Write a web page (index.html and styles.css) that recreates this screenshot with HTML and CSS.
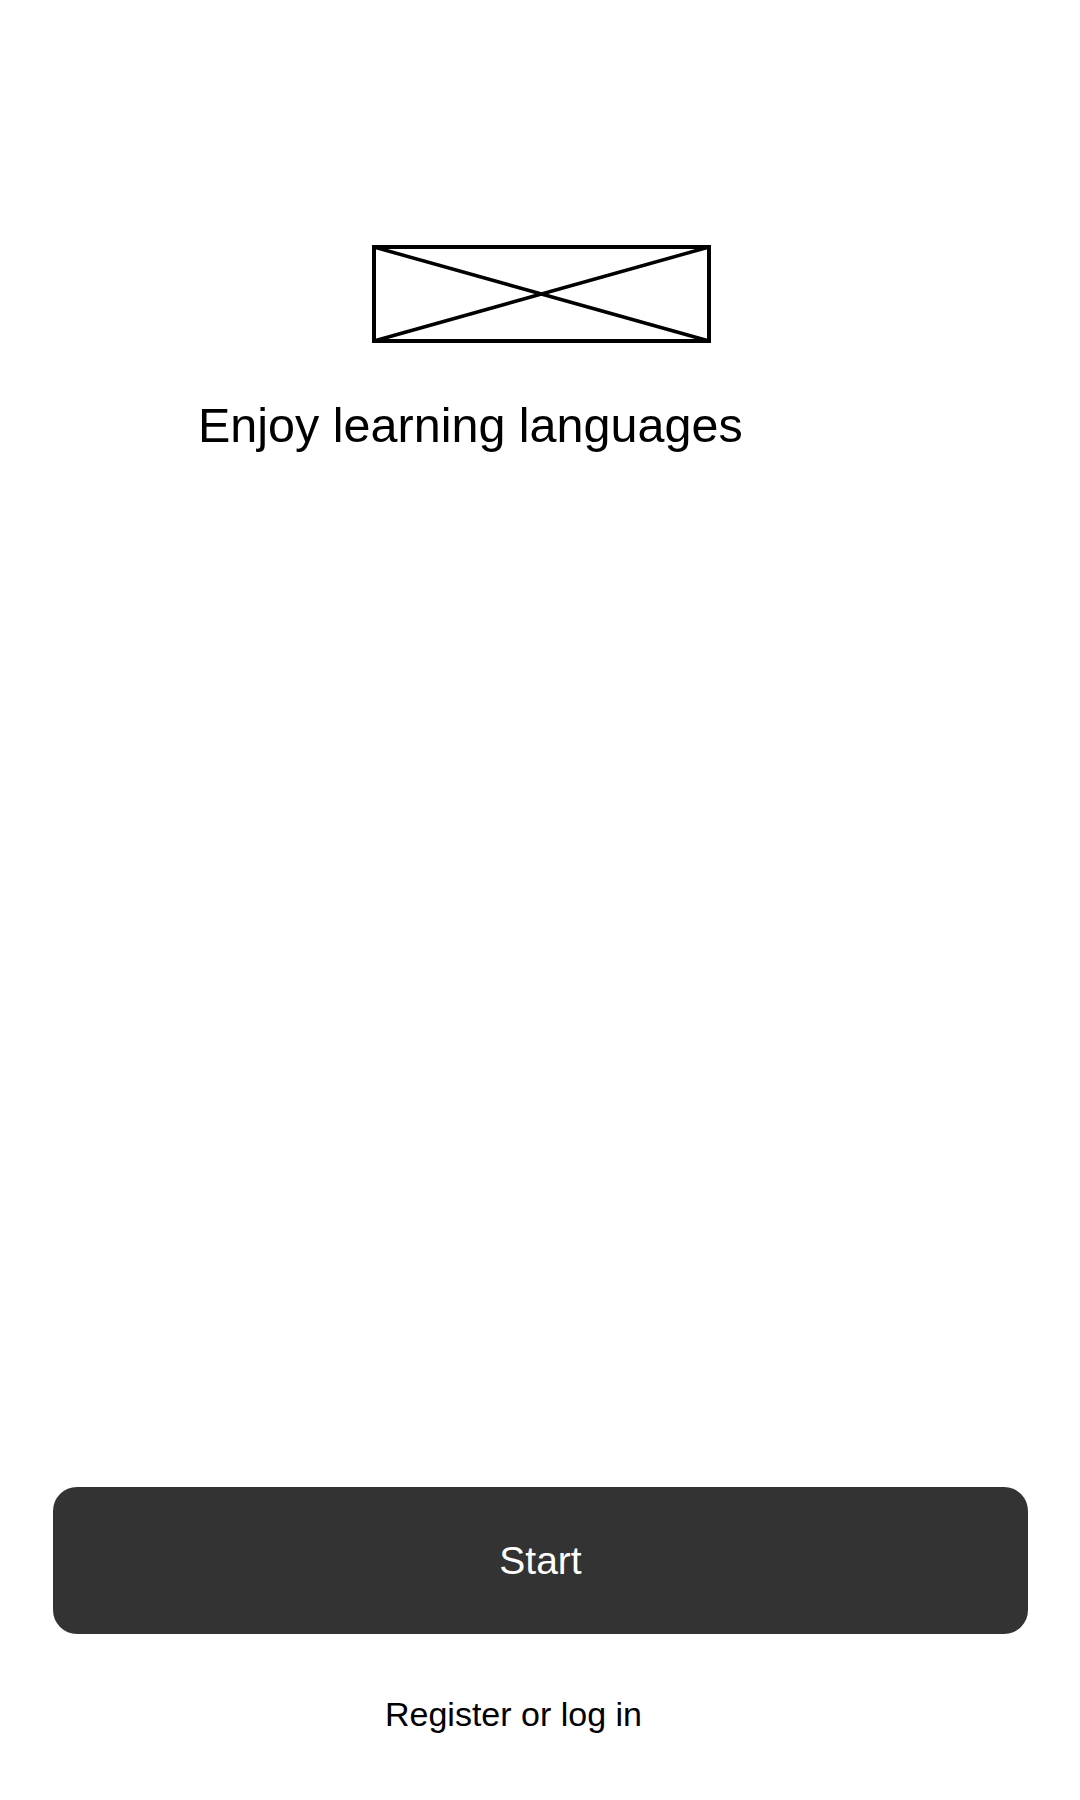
FILE: index.html
```html
<!DOCTYPE html>
<html lang="en">
<head>
<meta charset="utf-8">
<title>Enjoy learning languages</title>
<link rel="stylesheet" href="styles.css">
</head>
<body>
<main class="screen">
  <section class="hero">
    <svg class="placeholder" viewBox="0 0 339 98" width="339" height="98" aria-label="Logo placeholder">
      <rect x="2" y="2" width="335" height="94" fill="none" stroke="#000" stroke-width="4"/>
      <line x1="2" y1="2" x2="337" y2="96" stroke="#000" stroke-width="3.5"/>
      <line x1="2" y1="96" x2="337" y2="2" stroke="#000" stroke-width="3.5"/>
    </svg>
    <h1 class="tagline">Enjoy learning languages</h1>
  </section>
  <section class="actions">
    <button class="start-btn" type="button">Start</button>
    <a class="login-link" href="#">Register or log in</a>
  </section>
</main>
</body>
</html>
```

FILE: styles.css
```css
html, body {
  margin: 0;
  padding: 0;
  background: #ffffff;
}

body {
  font-family: "Liberation Sans", Arial, sans-serif;
  color: #000000;
}

.screen {
  height: 1800px;
  display: flex;
  flex-direction: column;
  box-sizing: border-box;
  padding-bottom: 69px;
}

.hero {
  display: flex;
  flex-direction: column;
  padding-top: 245px;
}

.placeholder {
  display: block;
  margin-left: 372px;
}

.tagline {
  margin: 58px 0 0 198px;
  font-size: 48.5px;
  line-height: 48px;
  font-weight: 400;
}

.actions {
  margin-top: auto;
  display: flex;
  flex-direction: column;
}

.start-btn {
  margin: 0 52px 0 53px;
  height: 147px;
  border: none;
  border-radius: 24px;
  background: #333333;
  color: #ffffff;
  font-family: "Liberation Sans", Arial, sans-serif;
  font-size: 39px;
  line-height: 1;
  padding: 0;
}

.login-link {
  margin: 63px 0 0 385px;
  font-size: 34px;
  line-height: 34px;
  color: #000000;
  text-decoration: none;
}
```
